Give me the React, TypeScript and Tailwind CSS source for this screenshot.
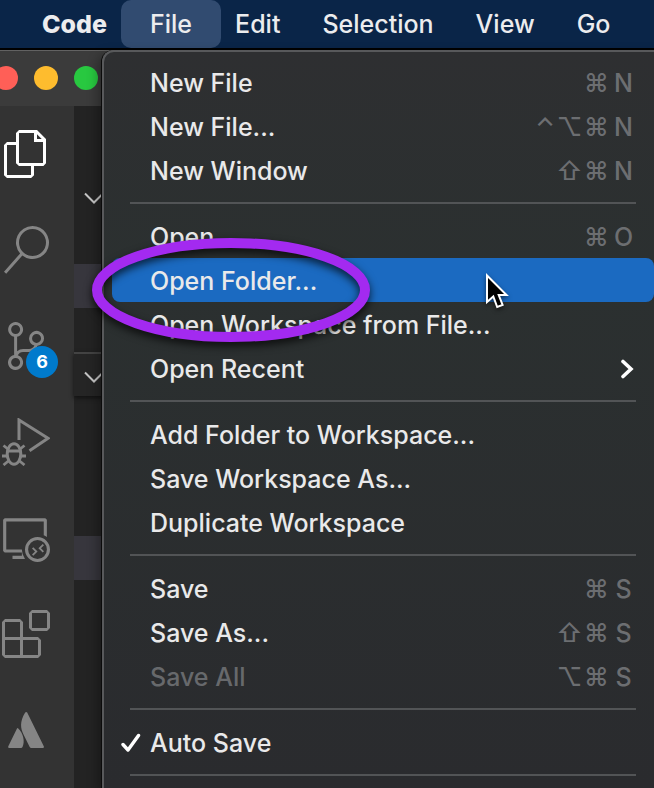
import { Fragment } from "react";
import type { ReactNode } from "react";
import clsx from "clsx";
import {
  VscExtensions,
  VscFiles,
  VscRemoteExplorer,
  VscSearch,
  VscSourceControl,
} from "react-icons/vsc";

type Item = {
  label: string;
  keys?: string[];
  active?: boolean;
  disabled?: boolean;
  checked?: boolean;
  submenu?: boolean;
};

const groups: Item[][] = [
  [
    { label: "New File", keys: ["⌘", "N"] },
    { label: "New File...", keys: ["⌃", "⌥", "⌘", "N"] },
    { label: "New Window", keys: ["⇧", "⌘", "N"] },
  ],
  [
    { label: "Open...", keys: ["⌘", "O"] },
    { label: "Open Folder...", active: true },
    { label: "Open Workspace from File..." },
    { label: "Open Recent", submenu: true },
  ],
  [
    { label: "Add Folder to Workspace..." },
    { label: "Save Workspace As..." },
    { label: "Duplicate Workspace" },
  ],
  [
    { label: "Save", keys: ["⌘", "S"] },
    { label: "Save As...", keys: ["⇧", "⌘", "S"] },
    { label: "Save All", keys: ["⌥", "⌘", "S"], disabled: true },
  ],
  [{ label: "Auto Save", checked: true }],
];

function MenuBar() {
  return (
    <nav className="flex h-[50px] items-start overflow-hidden border-b-2 border-black bg-[#0a2548] pl-[21px] text-[#ececee]">
      {["Code", "File", "Edit", "Selection", "View", "Go"].map((name) => (
        <button
          key={name}
          type="button"
          className={clsx(
            "h-12 shrink-0 whitespace-nowrap",
            name === "File"
              ? "-mx-[7px] rounded-[10px] bg-[#314b70] px-[29px]"
              : "px-[21px]",
            name === "Code" ? "font-extrabold" : "font-medium",
          )}
        >
          {name}
        </button>
      ))}
    </nav>
  );
}

function TitleBar() {
  return (
    <div className="flex h-14 items-center gap-4 border-t border-[#626262] bg-[#3b3b3b] pb-px">
      <span className="-ml-[6px] size-6 rounded-full bg-[#ff5f57]" />
      <span className="size-6 rounded-full bg-[#febc2e]" />
      <span className="size-6 rounded-full bg-[#28c840]" />
    </div>
  );
}

function RailButton({
  label,
  selected,
  children,
}: {
  label: string;
  selected?: boolean;
  children: ReactNode;
}) {
  return (
    <button
      type="button"
      aria-label={label}
      className={clsx(
        "relative flex h-24 items-center pl-[2px]",
        selected ? "text-white" : "text-[#858585]",
      )}
    >
      {children}
    </button>
  );
}

function DebugIcon() {
  return (
    <svg width="48" height="48" viewBox="0 0 48 48" fill="none" stroke="currentColor" strokeWidth="3">
      <path d="M17 22V2L46 20.300 27.500 32.700" />
      <ellipse cx="12" cy="36" rx="6.800" ry="10.200" strokeWidth="3" />
      <path d="M5.500 33H18.500M0 38H5.500M18.500 38H24M1.500 27.500 6.500 31.500M22.500 27.500 17.500 31.500M1.500 47 7 42.500M22.500 47 17 42.500" strokeWidth="2.800" />
    </svg>
  );
}

function ActivityRail() {
  return (
    <aside className="flex w-[74px] shrink-0 flex-col bg-[#333333]">
      <RailButton label="Explorer" selected>
        <VscFiles size={48} />
      </RailButton>
      <RailButton label="Search">
        <VscSearch size={48} />
      </RailButton>
      <RailButton label="Source Control">
        <VscSourceControl size={48} />
        <span className="absolute top-12 left-[26px] flex size-8 items-center justify-center rounded-full bg-[#007acc] text-lg font-bold text-white">
          6
        </span>
      </RailButton>
      <RailButton label="Run and Debug">
        <DebugIcon />
      </RailButton>
      <RailButton label="Remote Explorer">
        <VscRemoteExplorer size={48} />
      </RailButton>
      <RailButton label="Extensions">
        <VscExtensions size={48} />
      </RailButton>
      <RailButton label="Atlassian">
        <svg width="48" height="48" viewBox="0 0 48 48" fill="currentColor">
          <path d="M16 22.3Q15.600 21.800 15 22.600L6.200 40.600Q5.800 42 7 42H19Q20 42 20.500 41C23 35.500 21.500 27.500 16 22.300Z" />
          <path d="M23.200 6.600C17.500 15.800 18.500 22.500 21.500 28.500L27.700 41Q28.200 42 29.200 42H41Q42.400 42 41.900 40.600L25.200 6.600Q24.200 5.200 23.200 6.600Z" />
        </svg>
      </RailButton>
    </aside>
  );
}

function Twistie() {
  return (
    <svg width="20" height="12" viewBox="0 0 20 12" fill="none" stroke="#c5c5c5" strokeWidth="2">
      <path d="M1 1.500 10 10.500 19 1.500" />
    </svg>
  );
}

function SideBar() {
  return (
    <section className="flex flex-1 flex-col bg-[#232323] pt-[70px]">
      <div className="flex h-11 items-center pl-[10px]">
        <Twistie />
      </div>
      <div className="mt-11 h-11 bg-[#37363d]" />
      <div className="mt-11 flex h-11 items-center border-t-2 border-[#434343] bg-[#252525] pt-1 pl-[10px] shadow-[0_2px_4px_#111111]">
        <Twistie />
      </div>
      <div className="mt-[140px] h-11 bg-[#37363d]" />
    </section>
  );
}

function MenuRow({ item }: { item: Item }) {
  return (
    <li>
      <button
        type="button"
        disabled={item.disabled}
        className={clsx(
          "flex h-11 w-full items-center rounded-lg pt-[2px] pr-[17px] text-left font-medium whitespace-nowrap",
          item.active ? "bg-[#1b6ac1]" : "bg-transparent",
          item.disabled ? "text-[#67696c]" : "text-[#e9e9ea]",
        )}
      >
        <span className="flex w-[38px] shrink-0 items-center pl-[9px]">
          {item.checked && (
            <svg width="20" height="20" viewBox="0 0 20 20" fill="none" stroke="white" strokeWidth="3.400" strokeLinecap="round" strokeLinejoin="round">
              <path d="M2 11.500 7 17 17.500 2.500" />
            </svg>
          )}
        </span>
        <span className="flex-1">{item.label}</span>
        {item.keys && (
          <span className="flex text-[#6c6e71]">
            {item.keys.map((key) => (
              <kbd
                key={key}
                className={clsx(
                  "flex justify-center font-['Inter','DejaVu_Sans',sans-serif]",
                  key === "⌃" ? "w-[22px]" : "w-[27px]",
                )}
              >
                {key}
              </kbd>
            ))}
          </span>
        )}
        {item.submenu && (
          <svg width="18" height="20" viewBox="0 0 18 20" fill="none" stroke="white" strokeWidth="3.600" strokeLinecap="round">
            <path d="M4 2.500 12 10 4 17.500" />
          </svg>
        )}
      </button>
    </li>
  );
}

function FileMenu() {
  return (
    <div className="absolute top-0 -right-2 bottom-0 left-[102px] rounded-tl-[12px] border-t-2 border-l-2 border-[#58595b] bg-linear-to-b from-[#2e2f31] via-[#2b3030] via-30% to-[#2a2b2e] px-2 pt-2 shadow-[-1px_0_0_0_#0b0b0b,-4px_4px_12px_#00000055]">
      <ul>
        {groups.map((group, index) => (
          <Fragment key={index}>
            {group.map((item) => (
              <MenuRow key={item.label} item={item} />
            ))}
            <li className="mr-[18px] ml-[18px] py-[10px]" role="separator">
              <div className="h-[2px] bg-[#525456]" />
            </li>
          </Fragment>
        ))}
      </ul>
    </div>
  );
}

function HighlightRing() {
  return (
    <svg
      className="pointer-events-none absolute top-[188px] left-[92px] overflow-visible drop-shadow-[0_4px_4px_#000000bb]"
      width="278"
      height="104"
      viewBox="0 0 278 104"
      fill="none"
    >
      <ellipse cx="139" cy="52" rx="134" ry="47" stroke="#a32af0" strokeWidth="10" />
    </svg>
  );
}

function Pointer() {
  return (
    <svg
      className="pointer-events-none absolute top-[222px] left-[485px] overflow-visible drop-shadow-[0_2px_2px_#00000088]"
      width="26"
      height="38"
      viewBox="0 0 26 38"
    >
      <path
        d="M2 3.500V30L8.300 24.500 12.200 35 17.600 33 13.700 23H21.500Z"
        fill="black"
        stroke="white"
        strokeWidth="2"
      />
    </svg>
  );
}

export default function App() {
  return (
    <div className="flex min-h-screen flex-col overflow-hidden bg-[#232323] font-['Inter','Liberation_Sans',sans-serif] text-[25px] leading-8">
      <MenuBar />
      <main className="relative flex flex-1 flex-col">
        <TitleBar />
        <div className="flex flex-1">
          <ActivityRail />
          <SideBar />
        </div>
        <FileMenu />
        <HighlightRing />
        <Pointer />
      </main>
    </div>
  );
}
